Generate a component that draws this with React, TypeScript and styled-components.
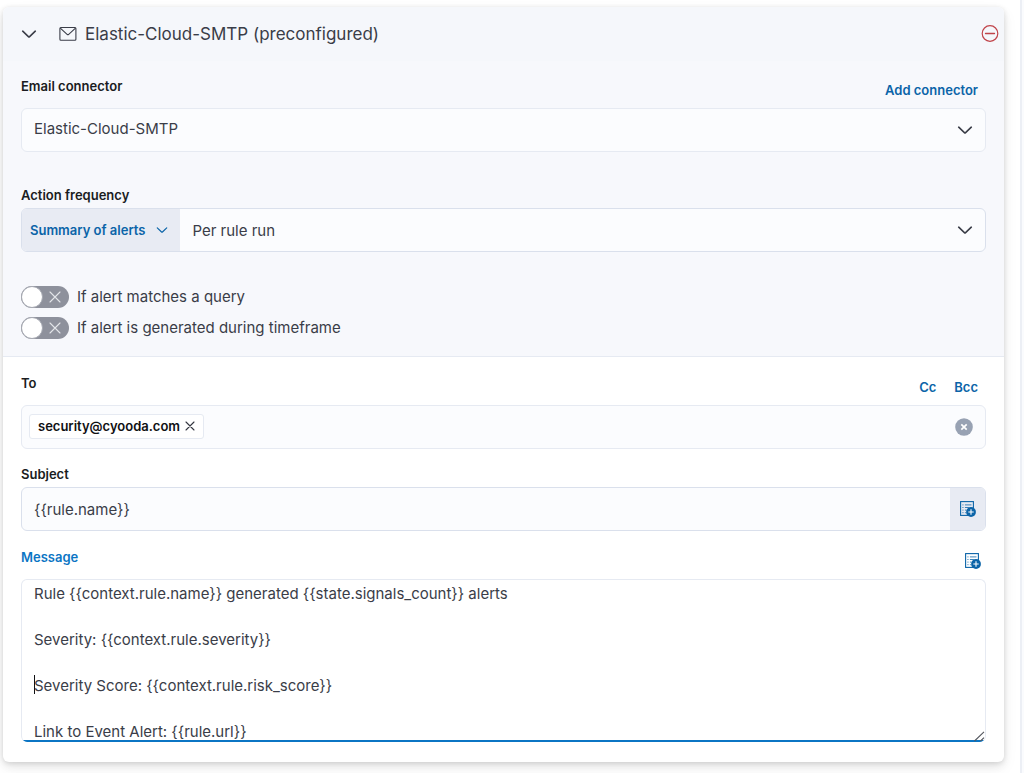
import React from "react";
import styled, { createGlobalStyle, css } from "styled-components";

const colors = {
  text: "#3a3d48",
  title: "#1a1c21",
  link: "#0b64a8",
  primary: "#0b75c4",
  subdued: "#f7f8fc",
  header: "#f5f7fb",
  field: "#fbfcfe",
  border: "#e6eaf2",
  groupBorder: "#dae0ec",
  addon: "#e8ebf3",
};

const GlobalStyle = createGlobalStyle`
  *, *::before, *::after { box-sizing: border-box; }
  body {
    margin: 0;
    background: #fafbfd;
    color: ${colors.text};
    font-family: Inter, "Liberation Sans", sans-serif;
    font-size: 15px;
    line-height: 20px;
  }
  button, input, select, textarea { font: inherit; color: inherit; margin: 0; }
`;

const Page = styled.main`
  margin-right: 2px;
  padding: 7px 16px 11px 3px;
  border-right: 2px solid #eceff5;
  background: #fff;
  overflow: hidden;
`;

const Card = styled.section`
  border-radius: 6px;
  background: #fff;
  box-shadow: 0 1px 5px rgba(0, 0, 0, 0.1), 0 4px 8px rgba(0, 0, 0, 0.07),
    0 6px 16px rgba(0, 0, 0, 0.06);
`;

const Header = styled.header`
  display: flex;
  align-items: center;
  height: 54px;
  padding: 0 5px 0 18px;
  border-radius: 6px 6px 0 0;
  background: ${colors.header};
`;

const Title = styled.h2`
  flex: 1;
  margin: 0 0 0 8px;
  font-size: 17px;
  font-weight: 400;
  line-height: 24px;
`;

const IconButton = styled.button<{ $color?: string }>`
  display: inline-flex;
  align-items: center;
  justify-content: center;
  padding: 0;
  border: 0;
  background: none;
  color: ${(p) => p.$color ?? "inherit"};
  cursor: pointer;
`;

const CollapseButton = styled(IconButton)`
  width: 16px;
  margin-right: 22px;
`;

const Section = styled.div<{ $subdued?: boolean }>`
  padding: 16px 18px 20px;
  ${(p) =>
    p.$subdued &&
    css`
      padding-top: 15px;
      padding-bottom: 17px;
      border-bottom: 1px solid ${colors.border};
      background: ${colors.subdued};
    `}
`;

const LabelRow = styled.div<{ $tall?: boolean }>`
  display: flex;
  align-items: flex-start;
  justify-content: space-between;
  height: ${(p) => (p.$tall ? 32 : 23)}px;
`;

const Label = styled.label<{ $active?: boolean }>`
  color: ${(p) => (p.$active ? colors.primary : colors.title)};
  font-size: 13px;
  font-weight: 600;
`;

const LabelActions = styled.div`
  display: flex;
  align-items: center;
  gap: 18px;
  height: 28px;
  padding-right: 8px;
`;

const ActionLink = styled.a`
  color: ${colors.link};
  font-size: 13px;
  font-weight: 600;
  text-decoration: none;
`;

const InsertButton = styled(IconButton)`
  margin-right: -3px;
`;

const SelectWrap = styled.div`
  display: grid;
  flex: 1;
  align-items: center;

  > * {
    grid-area: 1 / 1;
  }
  > svg {
    justify-self: end;
    margin-right: 12px;
    pointer-events: none;
  }
`;

const Select = styled.select`
  width: 100%;
  height: 100%;
  padding: 0 40px 0 12px;
  border: 0;
  outline: 0;
  appearance: none;
  background: transparent;
`;

const TextInput = styled.input`
  flex: 1;
  min-width: 0;
  padding: 0 12px;
  border: 0;
  outline: 0;
  background: transparent;
`;

const Field = styled.div<{ $group?: boolean; $gap: number }>`
  display: flex;
  height: 44px;
  margin-bottom: ${(p) => p.$gap}px;
  overflow: hidden;
  border: 1px solid ${(p) => (p.$group ? colors.groupBorder : colors.border)};
  border-radius: 6px;
  background: ${colors.field};

  ${Select}, ${TextInput} {
    ${(p) => (p.$group ? "padding-top: 2px;" : "padding-bottom: 2px;")}
  }
`;

const Prepend = styled.button`
  display: flex;
  align-items: center;
  gap: 11px;
  padding: 0 12px 0 8px;
  border: 0;
  background: ${colors.addon};
  color: ${colors.link};
  font-size: 13px;
  font-weight: 600;
`;

const Append = styled(IconButton)`
  width: 35px;
  background: ${colors.addon};
`;

const Switches = styled.div`
  display: flex;
  flex-direction: column;
  align-items: flex-start;
  gap: 9px;
`;

const SwitchLabel = styled.label`
  display: flex;
  align-items: center;
  gap: 8px;
  height: 22px;
`;

const SwitchTrack = styled.span`
  display: grid;
  align-items: center;
  width: 48px;
  height: 22px;

  > * {
    grid-area: 1 / 1;
  }
  > svg {
    justify-self: end;
    margin-right: 8px;
    pointer-events: none;
  }
`;

const SwitchInput = styled.input`
  display: flex;
  width: 48px;
  height: 22px;
  border-radius: 11px;
  appearance: none;
  background: #8e919c;

  &::before {
    content: "";
    width: 22px;
    height: 22px;
    border: 1px solid #a5a8b1;
    border-radius: 50%;
    background: #fff;
  }
  &:checked {
    justify-content: flex-end;
    background: ${colors.primary};
  }
`;

const ComboBox = styled(Field)`
  align-items: center;
  padding: 0 12px 0 7px;
`;

const Pill = styled.span`
  display: inline-flex;
  align-items: center;
  gap: 5px;
  height: 25px;
  margin-bottom: 2px;
  padding: 0 8px;
  border: 1px solid ${colors.border};
  border-radius: 3px;
  background: #fff;
  color: #101114;
  font-size: 13px;
  font-weight: 600;
`;

const MessageBox = styled.div`
  position: relative;
  overflow: hidden;
  border: 1px solid ${colors.border};
  border-bottom: 0;
  border-radius: 6px;
  background: #fff;

  > svg {
    position: absolute;
    right: 0;
    bottom: 0;
    pointer-events: none;
  }
`;

const TextArea = styled.textarea`
  display: block;
  width: 100%;
  height: 162px;
  padding: 2px 12px 0;
  overflow: hidden;
  border: 0;
  outline: 0;
  resize: none;
  background: linear-gradient(${colors.primary}, ${colors.primary}) bottom / 100% 2px
    no-repeat;
  line-height: 23px;
`;

const Caret = styled.span`
  position: absolute;
  top: 95px;
  left: 12px;
  width: 1px;
  height: 19px;
  background: #101114;
`;

const Chevron = ({ width = 16, stroke = 1.6 }: { width?: number; stroke?: number }) => (
  <svg width={width} height={width} viewBox="0 0 16 16" fill="none" aria-hidden="true">
    <path
      d="M1.7 5.2 7.4 10.6a.9.9 0 0 0 1.2 0L14.3 5.2"
      stroke="currentColor"
      strokeWidth={stroke}
      strokeLinecap="round"
    />
  </svg>
);

const Cross = ({ size, color, stroke = 1.1 }: { size: number; color: string; stroke?: number }) => (
  <svg width={size} height={size} viewBox={`0 0 ${size} ${size}`} aria-hidden="true">
    <path
      d={`M1 1 ${size - 1} ${size - 1}M${size - 1} 1 1 ${size - 1}`}
      stroke={color}
      strokeWidth={stroke}
      strokeLinecap="round"
    />
  </svg>
);

const MailIcon = () => (
  <svg width="18" height="16" viewBox="0 0 18 16" fill="none" stroke="#3a3d48" aria-hidden="true">
    <rect x="0.9" y="1.5" width="16" height="12.8" rx="1" strokeWidth="1.1" />
    <path d="M1.3 2.2 8.1 8.3a1.2 1.2 0 0 0 1.6 0L16.5 2.2" strokeWidth="1.1" />
  </svg>
);

const MinusCircle = () => (
  <svg width="18" height="18" viewBox="0 0 18 18" fill="none" stroke="currentColor" aria-hidden="true">
    <circle cx="9" cy="8.5" r="7.8" strokeWidth="1.2" />
    <path d="M4.5 8.5h9" strokeWidth="1.3" strokeLinecap="round" />
  </svg>
);

const ClearIcon = () => (
  <svg width="18" height="18" viewBox="0 0 18 18" aria-hidden="true">
    <circle cx="9" cy="9" r="8.8" fill="#98a2b3" />
    <path d="M6.3 6.3l5.4 5.4M11.7 6.3l-5.4 5.4" stroke="#fff" strokeWidth="1.7" />
  </svg>
);

const VariableIcon = () => (
  <svg width="16" height="16" viewBox="0 0 16 16" fill="none" aria-hidden="true">
    <rect x="0.6" y="0.6" width="12.8" height="13.8" stroke={colors.link} strokeWidth="1.1" />
    <path
      d="M2.4 3.9h1.1M4.9 3.9h6.6M2.4 6.5h1.1M4.9 6.5h4M2.4 9.1h1.1M4.9 9.1h1.4M2.4 11.7h1.1M4.9 11.7h1"
      stroke={colors.link}
      strokeWidth="0.8"
    />
    <circle cx="11" cy="11" r="4.9" fill={colors.link} />
    <path d="M11 8.3v5.4M8.3 11h5.4" stroke="#fff" strokeWidth="1.1" />
  </svg>
);

const ResizeGrip = () => (
  <svg width="12" height="12" viewBox="0 0 12 12" aria-hidden="true">
    <path d="M1.5 11 11 1.8M7.5 11 11 7.6" stroke="#55585f" strokeWidth="1.1" />
  </svg>
);

const message = [
  "Rule {{context.rule.name}} generated {{state.signals_count}} alerts",
  "Severity: {{context.rule.severity}}",
  "Severity Score: {{context.rule.risk_score}}",
  "Link to Event Alert: {{rule.url}}",
].join("\n\n");

const Switch = ({ children }: { children: React.ReactNode }) => (
  <SwitchLabel>
    <SwitchTrack>
      <SwitchInput type="checkbox" role="switch" />
      <Cross size={12} color="#e4e6ea" />
    </SwitchTrack>
    {children}
  </SwitchLabel>
);

export default function App() {
  return (
    <>
      <GlobalStyle />
      <Page>
        <Card>
          <Header>
            <CollapseButton type="button" aria-label="Collapse action">
              <Chevron />
            </CollapseButton>
            <MailIcon />
            <Title>Elastic-Cloud-SMTP (preconfigured)</Title>
            <IconButton type="button" $color="#c0444a" aria-label="Remove action">
              <MinusCircle />
            </IconButton>
          </Header>

          <Section $subdued>
            <LabelRow $tall>
              <Label htmlFor="connector">Email connector</Label>
              <LabelActions>
                <ActionLink href="#add-connector">Add connector</ActionLink>
              </LabelActions>
            </LabelRow>
            <Field $gap={33}>
              <SelectWrap>
                <Select id="connector">
                  <option>Elastic-Cloud-SMTP</option>
                </Select>
                <Chevron />
              </SelectWrap>
            </Field>

            <LabelRow>
              <Label htmlFor="frequency">Action frequency</Label>
            </LabelRow>
            <Field $group $gap={34}>
              <Prepend type="button">
                Summary of alerts
                <Chevron width={12} />
              </Prepend>
              <SelectWrap>
                <Select id="frequency">
                  <option>Per rule run</option>
                </Select>
                <Chevron />
              </SelectWrap>
            </Field>

            <Switches>
              <Switch>If alert matches a query</Switch>
              <Switch>If alert is generated during timeframe</Switch>
            </Switches>
          </Section>

          <Section>
            <LabelRow $tall>
              <Label htmlFor="recipients">To</Label>
              <LabelActions>
                <ActionLink href="#cc">Cc</ActionLink>
                <ActionLink href="#bcc">Bcc</ActionLink>
              </LabelActions>
            </LabelRow>
            <ComboBox $gap={15}>
              <Pill>
                security@cyooda.com
                <IconButton type="button" aria-label="Remove security@cyooda.com">
                  <Cross size={10} color="#343741" />
                </IconButton>
              </Pill>
              <TextInput id="recipients" />
              <IconButton type="button" aria-label="Clear recipients">
                <ClearIcon />
              </IconButton>
            </ComboBox>

            <LabelRow>
              <Label htmlFor="subject">Subject</Label>
            </LabelRow>
            <Field $group $gap={16}>
              <TextInput id="subject" defaultValue="{{rule.name}}" />
              <Append type="button" aria-label="Add variable to subject">
                <VariableIcon />
              </Append>
            </Field>

            <LabelRow $tall>
              <Label htmlFor="message" $active>
                Message
              </Label>
              <LabelActions>
                <InsertButton type="button" aria-label="Add variable to message">
                  <VariableIcon />
                </InsertButton>
              </LabelActions>
            </LabelRow>
            <MessageBox>
              <TextArea id="message" defaultValue={message} />
              <Caret />
              <ResizeGrip />
            </MessageBox>
          </Section>
        </Card>
      </Page>
    </>
  );
}
